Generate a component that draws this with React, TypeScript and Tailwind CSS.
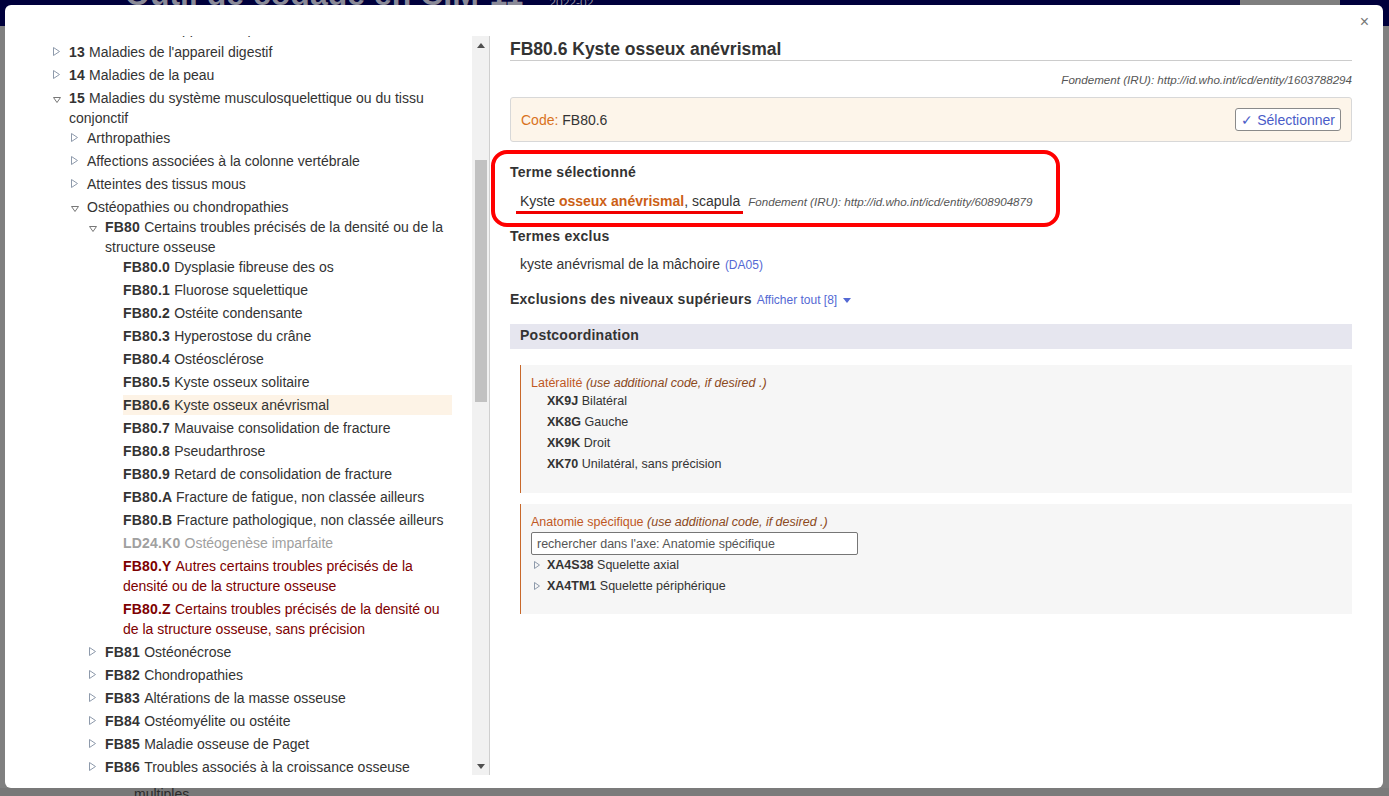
import React from "react";

type TreeItem = {
  level: number;
  code?: string;
  label: string;
  state: "open" | "closed" | "leaf";
  tone?: "gray" | "red";
  active?: boolean;
};

const tree: TreeItem[] = [
  { level: 1, code: "12", label: "Maladies de l'appareil respiratoire", state: "closed" },
  { level: 1, code: "13", label: "Maladies de l'appareil digestif", state: "closed" },
  { level: 1, code: "14", label: "Maladies de la peau", state: "closed" },
  { level: 1, code: "15", label: "Maladies du système musculosquelettique ou du tissu conjonctif", state: "open" },
  { level: 2, label: "Arthropathies", state: "closed" },
  { level: 2, label: "Affections associées à la colonne vertébrale", state: "closed" },
  { level: 2, label: "Atteintes des tissus mous", state: "closed" },
  { level: 2, label: "Ostéopathies ou chondropathies", state: "open" },
  { level: 3, code: "FB80", label: "Certains troubles précisés de la densité ou de la structure osseuse", state: "open" },
  { level: 4, code: "FB80.0", label: "Dysplasie fibreuse des os", state: "leaf" },
  { level: 4, code: "FB80.1", label: "Fluorose squelettique", state: "leaf" },
  { level: 4, code: "FB80.2", label: "Ostéite condensante", state: "leaf" },
  { level: 4, code: "FB80.3", label: "Hyperostose du crâne", state: "leaf" },
  { level: 4, code: "FB80.4", label: "Ostéosclérose", state: "leaf" },
  { level: 4, code: "FB80.5", label: "Kyste osseux solitaire", state: "leaf" },
  { level: 4, code: "FB80.6", label: "Kyste osseux anévrismal", state: "leaf", active: true },
  { level: 4, code: "FB80.7", label: "Mauvaise consolidation de fracture", state: "leaf" },
  { level: 4, code: "FB80.8", label: "Pseudarthrose", state: "leaf" },
  { level: 4, code: "FB80.9", label: "Retard de consolidation de fracture", state: "leaf" },
  { level: 4, code: "FB80.A", label: "Fracture de fatigue, non classée ailleurs", state: "leaf" },
  { level: 4, code: "FB80.B", label: "Fracture pathologique, non classée ailleurs", state: "leaf" },
  { level: 4, code: "LD24.K0", label: "Ostéogenèse imparfaite", state: "leaf", tone: "gray" },
  { level: 4, code: "FB80.Y", label: "Autres certains troubles précisés de la densité ou de la structure osseuse", state: "leaf", tone: "red" },
  { level: 4, code: "FB80.Z", label: "Certains troubles précisés de la densité ou de la structure osseuse, sans précision", state: "leaf", tone: "red" },
  { level: 3, code: "FB81", label: "Ostéonécrose", state: "closed" },
  { level: 3, code: "FB82", label: "Chondropathies", state: "closed" },
  { level: 3, code: "FB83", label: "Altérations de la masse osseuse", state: "closed" },
  { level: 3, code: "FB84", label: "Ostéomyélite ou ostéite", state: "closed" },
  { level: 3, code: "FB85", label: "Maladie osseuse de Paget", state: "closed" },
  { level: 3, code: "FB86", label: "Troubles associés à la croissance osseuse", state: "closed" },
  { level: 3, code: "FB87", label: "Exostoses multiples", state: "closed" },
];

const indents: Record<number, string> = {
  1: "pl-[46px]",
  2: "pl-[64px]",
  3: "pl-[82px]",
  4: "pl-[100px]",
};

function Closed() {
  return (
    <svg width="7" height="9" viewBox="0 0 7 9" className="mt-[5px] ml-[2px]">
      <polygon points="0.5,0.5 6.5,4.5 0.5,8.5" fill="none" stroke="#8e9aab" strokeWidth="1" />
    </svg>
  );
}

function Opened() {
  return (
    <svg width="8" height="6" viewBox="0 0 8 6" className="mt-[9px] ml-[2px]">
      <polygon points="0.5,0.5 7.5,0.5 4,5.5" fill="none" stroke="#777" strokeWidth="1" />
    </svg>
  );
}

function TreeRow({ item }: { item: TreeItem }) {
  const color =
    item.tone === "gray" ? "text-[#a0a0a0]" : item.tone === "red" ? "text-[#7d0000]" : "text-[#333]";
  return (
    <div className={`flex ${indents[item.level]} ${item.state === "open" ? "mb-0" : "mb-[3px]"}`}>
      <div className="w-[18px] shrink-0">
        {item.state === "closed" && <Closed />}
        {item.state === "open" && <Opened />}
      </div>
      <div className={`flex-1 leading-[20px] ${color} ${item.active ? "bg-[#fdf3e6]" : ""}`}>
        {item.code && <span className="font-bold tracking-[0.2px]">{item.code} </span>}
        {item.label}
      </div>
    </div>
  );
}

function Scrollbar() {
  return (
    <div className="w-[17px] shrink-0 bg-[#f1f1f1] flex flex-col items-center">
      <svg width="8" height="5" viewBox="0 0 8 5" className="mt-[7px]">
        <polygon points="0,5 8,5 4,0" fill="#505050" />
      </svg>
      <div className="mt-[112px] w-[12px] h-[242px] bg-[#c1c1c1]" />
      <div className="flex-1" />
      <svg width="8" height="5" viewBox="0 0 8 5" className="mb-[6px]">
        <polygon points="0,0 8,0 4,5" fill="#505050" />
      </svg>
    </div>
  );
}

function AxisItem({ code, label, arrow }: { code: string; label: string; arrow?: boolean }) {
  return (
    <div className="flex leading-[21px]">
      <div className="w-[16px] shrink-0">
        {arrow && (
          <svg width="6" height="8" viewBox="0 0 6 8" className="mt-[6px] ml-[3px]">
            <polygon points="0.5,0.5 5.5,4 0.5,7.5" fill="none" stroke="#8e9aab" strokeWidth="1" />
          </svg>
        )}
      </div>
      <div className="text-[12.5px] text-[#333]">
        <span className="font-bold">{code}</span> {label}
      </div>
    </div>
  );
}

export default function App() {
  return (
    <div className="relative w-[1389px] h-[796px] overflow-hidden bg-[#808080] font-['Liberation_Sans',Arial,sans-serif] text-[14px] text-[#333]">
      {/* page behind the dialog */}
      <div className="h-[26px] bg-[#00003c] flex items-start overflow-hidden">
        <div className="ml-[125px] -mt-[22px] text-[32px] leading-[32px] font-bold text-[#8a8a98]">
          Outil de codage en CIM-11
        </div>
        <div className="ml-[26px] -mt-[6px] text-[12px] text-[#8a8a98]">2022-02</div>
        <div className="ml-auto mr-[49px] w-[100px] h-[26px] bg-[#7f7f7f]" />
      </div>
      <div className="absolute left-0 right-0 bottom-0 h-[8px] bg-[#7b7b7b] overflow-hidden flex">
        <div className="w-[410px] h-full bg-[#787878]">
          <div className="ml-[134px] -mt-[4px] text-[14px] text-[#2a2a2a]">multiples</div>
        </div>
      </div>

      {/* dialog */}
      <div className="absolute left-[5px] top-[5px] w-[1378px] h-[783px] bg-white rounded-[6px] flex overflow-hidden">
        <div className="w-[485px] shrink-0 pt-[31px] pb-[13px] flex">
          <div className="flex flex-1 border-r border-[#cfcfcf]">
            <div className="flex-1 overflow-hidden pr-[20px]">
              <div className="-mt-[17px]">
                {tree.map((item, i) => (
                  <TreeRow key={i} item={item} />
                ))}
              </div>
            </div>
            <Scrollbar />
          </div>
        </div>

        <div className="relative flex-1 pl-[20px] pr-[31px] pt-[33px]">
          <div className="absolute top-[9px] right-[14px] text-[16px] leading-[16px] text-[#777]">×</div>

          <h2 className="text-[17.5px] leading-[22px] font-bold text-[#333] border-b border-[#cccccc]">
            FB80.6 Kyste osseux anévrismal
          </h2>
          <div className="mt-[11px] text-right text-[11.6px] leading-[15px] italic text-[#555]">
            Fondement (IRU): http://id.who.int/icd/entity/1603788294
          </div>

          <div className="mt-[10px] flex items-center justify-between rounded-[3px] border border-[#d8d8d8] bg-[#fdf5ea] px-[10px] py-[10px]">
            <div className="leading-[20px]">
              <span className="text-[#d9721c]">Code:</span> FB80.6
            </div>
            <button className="h-[23px] px-[5px] rounded-[3px] border border-[#8a8a8a] bg-white text-[14px] text-[#4a5cc8] leading-[20px]">
              ✓ Sélectionner
            </button>
          </div>

          <div className="relative mt-[20px]">
            <div className="pointer-events-none absolute left-[-19px] top-[-12px] w-[569px] h-[77px] rounded-[16px] border-4 border-[#ff0000]" />
            <div className="font-bold tracking-[0.25px] leading-[20px]">Terme sélectionné</div>
            <div className="mt-[9px] pl-[10px] leading-[20px]">
              <span className="relative">
                Kyste <span className="font-bold text-[#cc5f16]">osseux anévrismal</span>, scapula
                <span className="absolute left-[-4px] right-[-3px] bottom-[-5px] h-[3px] bg-[#f00000]" />
              </span>
              <span className="ml-[8px] text-[11.6px] italic text-[#555]">
                Fondement (IRU): http://id.who.int/icd/entity/608904879
              </span>
            </div>
          </div>

          <div className="mt-[14px] font-bold tracking-[0.25px] leading-[20px]">Termes exclus</div>
          <div className="mt-[8px] pl-[10px] leading-[20px]">
            kyste anévrismal de la mâchoire <span className="ml-[1px] text-[12px] text-[#5469d4]">(DA05)</span>
          </div>

          <div className="mt-[14px] leading-[20px] flex items-baseline">
            <span className="font-bold tracking-[0.25px]">Exclusions des niveaux supérieurs</span>
            <span className="ml-[5px] text-[12px] text-[#5469d4]">Afficher tout [8]</span>
            <svg width="8" height="5" viewBox="0 0 8 5" className="ml-[6px] self-center mt-[1px]">
              <polygon points="0,0 8,0 4,5" fill="#5469d4" />
            </svg>
          </div>

          <div className="mt-[14px] h-[25px] bg-[#e6e6ef] pl-[10px] font-bold tracking-[0.25px] leading-[23px]">
            Postcoordination
          </div>

          <div className="mt-[16px] ml-[10px] border-l border-[#c8682a] bg-[#f6f6f6] pl-[10px] pt-[10px] pb-[18px]">
            <div className="text-[12.5px] leading-[16px]">
              <span className="text-[#c0581f]">Latéralité</span>{" "}
              <span className="italic text-[#8c4a1c]">(use additional code, if desired .)</span>
            </div>
            <AxisItem code="XK9J" label="Bilatéral" />
            <AxisItem code="XK8G" label="Gauche" />
            <AxisItem code="XK9K" label="Droit" />
            <AxisItem code="XK70" label="Unilatéral, sans précision" />
          </div>

          <div className="mt-[11px] ml-[10px] border-l border-[#c8682a] bg-[#f6f6f6] pl-[10px] pt-[10px] pb-[17px]">
            <div className="text-[12.5px] leading-[16px]">
              <span className="text-[#c0581f]">Anatomie spécifique</span>{" "}
              <span className="italic text-[#8c4a1c]">(use additional code, if desired .)</span>
            </div>
            <input
              className="mt-[2px] block w-[327px] h-[23px] rounded-[2px] border border-[#767676] bg-white px-[5px] text-[12.5px] text-[#333] placeholder:text-[#555] outline-none"
              placeholder="rechercher dans l'axe: Anatomie spécifique"
            />
            <AxisItem code="XA4S38" label="Squelette axial" arrow />
            <AxisItem code="XA4TM1" label="Squelette périphérique" arrow />
          </div>
        </div>
      </div>
    </div>
  );
}
